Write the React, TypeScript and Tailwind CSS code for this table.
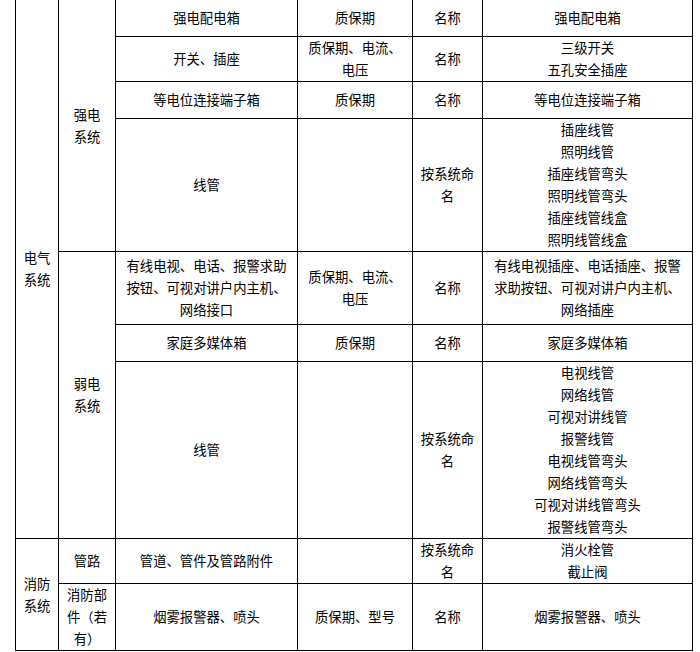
import React from "react";

const cell = "border border-black px-[7px] text-center align-middle leading-[22px]";

function Lines({ items }: { items: string[] }) {
  return (
    <>
      {items.map((t) => (
        <div key={t}>{t}</div>
      ))}
    </>
  );
}

export default function App() {
  return (
    <div className="w-[700px] h-[652px] overflow-hidden bg-white">
      <table
        className="ml-[15px] mt-[-1px] w-[677px] table-fixed border-collapse text-[13.33px] text-black"
        style={{ fontFamily: '"Noto Sans CJK SC", "Noto Sans", sans-serif' }}
      >
        <colgroup>
          <col className="w-[43px]" />
          <col className="w-[57px]" />
          <col className="w-[182px]" />
          <col className="w-[115px]" />
          <col className="w-[70px]" />
          <col className="w-[210px]" />
        </colgroup>
        <tbody>
          <tr className="h-[37px]">
            <td className={cell} rowSpan={7}>
              <Lines items={["电气", "系统"]} />
            </td>
            <td className={cell} rowSpan={4}>
              <Lines items={["强电", "系统"]} />
            </td>
            <td className={cell}>强电配电箱</td>
            <td className={cell}>质保期</td>
            <td className={cell}>名称</td>
            <td className={cell}>强电配电箱</td>
          </tr>
          <tr className="h-[45px]">
            <td className={cell}>开关、插座</td>
            <td className={cell}>质保期、电流、电压</td>
            <td className={cell}>名称</td>
            <td className={cell}>
              <Lines items={["三级开关", "五孔安全插座"]} />
            </td>
          </tr>
          <tr className="h-[37px]">
            <td className={cell}>等电位连接端子箱</td>
            <td className={cell}>质保期</td>
            <td className={cell}>名称</td>
            <td className={cell}>等电位连接端子箱</td>
          </tr>
          <tr className="h-[133px]">
            <td className={cell}>线管</td>
            <td className={cell}></td>
            <td className={cell}>按系统命名</td>
            <td className={cell}>
              <Lines
                items={["插座线管", "照明线管", "插座线管弯头", "照明线管弯头", "插座线管线盒", "照明线管线盒"]}
              />
            </td>
          </tr>
          <tr className="h-[73px]">
            <td className={cell} rowSpan={3}>
              <Lines items={["弱电", "系统"]} />
            </td>
            <td className={cell}>有线电视、电话、报警求助按钮、可视对讲户内主机、网络接口</td>
            <td className={cell}>质保期、电流、电压</td>
            <td className={cell}>名称</td>
            <td className={cell}>有线电视插座、电话插座、报警求助按钮、可视对讲户内主机、网络插座</td>
          </tr>
          <tr className="h-[37px]">
            <td className={cell}>家庭多媒体箱</td>
            <td className={cell}>质保期</td>
            <td className={cell}>名称</td>
            <td className={cell}>家庭多媒体箱</td>
          </tr>
          <tr className="h-[177px]">
            <td className={cell}>线管</td>
            <td className={cell}></td>
            <td className={cell}>按系统命名</td>
            <td className={cell}>
              <Lines
                items={[
                  "电视线管",
                  "网络线管",
                  "可视对讲线管",
                  "报警线管",
                  "电视线管弯头",
                  "网络线管弯头",
                  "可视对讲线管弯头",
                  "报警线管弯头",
                ]}
              />
            </td>
          </tr>
          <tr className="h-[45px]">
            <td className={cell} rowSpan={2}>
              <Lines items={["消防", "系统"]} />
            </td>
            <td className={cell}>管路</td>
            <td className={cell}>管道、管件及管路附件</td>
            <td className={cell}></td>
            <td className={cell}>按系统命名</td>
            <td className={cell}>
              <Lines items={["消火栓管", "截止阀"]} />
            </td>
          </tr>
          <tr className="h-[67px]">
            <td className={cell}>
              <Lines items={["消防部", "件（若", "有）"]} />
            </td>
            <td className={cell}>烟雾报警器、喷头</td>
            <td className={cell}>质保期、型号</td>
            <td className={cell}>名称</td>
            <td className={cell}>烟雾报警器、喷头</td>
          </tr>
        </tbody>
      </table>
    </div>
  );
}
